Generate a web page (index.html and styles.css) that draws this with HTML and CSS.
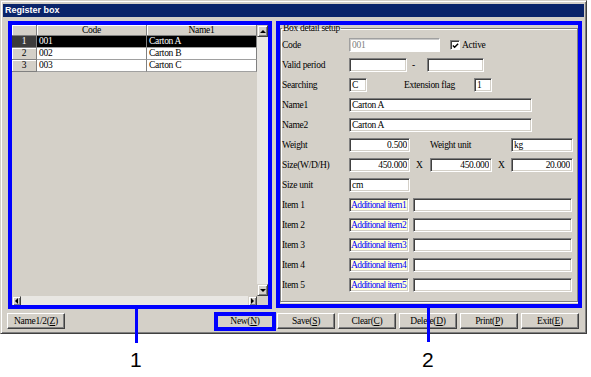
FILE: index.html
```html
<!DOCTYPE html>
<html lang="en">
<head>
    <meta charset="UTF-8">
    <title>Register box</title>
    <link rel="stylesheet" href="styles.css">
</head>
<body>

<div class="window">
    <div class="titlebar">Register box</div>

    <div class="main">
        <div class="grid-pane">
            <div class="grid-top">
                <div class="grid-view">
                    <table class="grid">
                        <colgroup>
                            <col class="c-head">
                            <col class="c-data">
                            <col class="c-data">
                        </colgroup>
                        <thead>
                            <tr><th></th><th>Code</th><th>Name1</th></tr>
                        </thead>
                        <tbody>
                            <tr class="sel"><th>1</th><td>001</td><td>Carton A</td></tr>
                            <tr><th>2</th><td>002</td><td>Carton B</td></tr>
                            <tr><th>3</th><td>003</td><td>Carton C</td></tr>
                        </tbody>
                    </table>
                </div>
                <div class="vscroll">
                    <div class="sbtn"><span class="arr up"></span></div>
                    <div class="track"></div>
                    <div class="sbtn"><span class="arr down"></span></div>
                </div>
            </div>
            <div class="hscroll-row">
                <div class="hscroll">
                    <div class="sbtn h"><span class="arr left"></span></div>
                    <div class="track"></div>
                    <div class="sbtn h"><span class="arr right"></span></div>
                </div>
                <div class="sb-corner"></div>
            </div>
        </div>

        <fieldset class="detail">
            <legend>Box detail setup</legend>

            <div class="row">
                <span class="lbl">Code</span>
                <input class="fld w91 disabled" value="001" readonly>
                <span class="check">
                    <svg width="8" height="8" viewBox="0 0 8 8"><path d="M1 3.5 L3 5.5 L7 1.5" fill="none" stroke="#000" stroke-width="1.6"/></svg>
                </span>
                <span class="check-lbl">Active</span>
            </div>
            <div class="row">
                <span class="lbl">Valid period</span>
                <input class="fld w58" value="">
                <span class="sep dash">-</span>
                <input class="fld w57" value="">
            </div>
            <div class="row">
                <span class="lbl">Searching</span>
                <input class="fld w18" value="C">
                <span class="lbl-mid ext">Extension flag</span>
                <input class="fld w18" value="1">
            </div>
            <div class="row">
                <span class="lbl">Name1</span>
                <input class="fld w183" value="Carton A">
            </div>
            <div class="row">
                <span class="lbl">Name2</span>
                <input class="fld w183" value="Carton A">
            </div>
            <div class="row">
                <span class="lbl">Weight</span>
                <input class="fld w61 num" value="0.500">
                <span class="lbl-mid wunit">Weight unit</span>
                <input class="fld w62" value="kg">
            </div>
            <div class="row">
                <span class="lbl">Size(W/D/H)</span>
                <input class="fld w61 num" value="450.000">
                <span class="sep x1">X</span>
                <input class="fld w62 num" value="450.000">
                <span class="sep x2">X</span>
                <input class="fld w62 num" value="20.000">
            </div>
            <div class="row">
                <span class="lbl">Size unit</span>
                <input class="fld w61" value="cm">
            </div>
            <div class="row">
                <span class="lbl">Item 1</span>
                <input class="fld item" value="Additional item1" readonly>
                <input class="fld w159" value="">
            </div>
            <div class="row">
                <span class="lbl">Item 2</span>
                <input class="fld item" value="Additional item2" readonly>
                <input class="fld w159" value="">
            </div>
            <div class="row">
                <span class="lbl">Item 3</span>
                <input class="fld item" value="Additional item3" readonly>
                <input class="fld w159" value="">
            </div>
            <div class="row">
                <span class="lbl">Item 4</span>
                <input class="fld item" value="Additional item4" readonly>
                <input class="fld w159" value="">
            </div>
            <div class="row">
                <span class="lbl">Item 5</span>
                <input class="fld item" value="Additional item5" readonly>
                <input class="fld w159" value="">
            </div>
        </fieldset>
    </div>

    <div class="buttons">
        <button class="btn">Name1/2(<u>Z</u>)</button>
        <button class="btn new">New(<u>N</u>)</button>
        <button class="btn">Save(<u>S</u>)</button>
        <button class="btn">Clear(<u>C</u>)</button>
        <button class="btn">Delete(<u>D</u>)</button>
        <button class="btn">Print(<u>P</u>)</button>
        <button class="btn">Exit(<u>E</u>)</button>
    </div>
</div>

<!-- callout annotations -->
<div class="mark mark-grid"></div>
<div class="mark mark-detail"></div>
<div class="mark mark-new"></div>
<div class="callout-line line-1"></div>
<div class="callout-line line-2"></div>
<div class="callout-num num-1">1</div>
<div class="callout-num num-2">2</div>

</body>
</html>
```

FILE: styles.css
```css
* {
    box-sizing: border-box;
}
body {
    margin: 0;
    background: #fff;
    font-family: "Liberation Serif", serif;
    font-size: 9.5px;
    letter-spacing: -0.3px;
    color: #000;
}
.window {
    width: 587px;
    height: 334px;
    background: #d4d0c8;
    border: 1px solid;
    border-color: #d4d0c8 #404040 #404040 #d4d0c8;
    box-shadow: inset 1px 1px #fff, inset -1px -1px #808080;
    padding: 3px 2px 2px 2px;
}
.titlebar {
    height: 13px;
    background: #0a246a;
    color: #fff;
    font-family: "Liberation Sans", sans-serif;
    font-weight: bold;
    font-size: 9px;
    letter-spacing: 0;
    line-height: 13px;
    padding-left: 2px;
}
.main {
    display: flex;
    align-items: flex-start;
    padding: 8px 0 0 9px;
}

/* grid */
.grid-pane {
    width: 256px;
    height: 281px;
    display: flex;
    flex-direction: column;
}
.grid-top {
    display: flex;
    height: 271px;
}
.grid-view {
    width: 245px;
    background: #d4d0c8;
}
.grid {
    table-layout: fixed;
    width: 245px;
    border-collapse: separate;
    border-spacing: 0;
}
.c-head {
    width: 25px;
}
.c-data {
    width: 110px;
}
.grid th, .grid td {
    height: 12px;
    padding: 0 2px;
    font-weight: normal;
    line-height: 11px;
    white-space: nowrap;
    overflow: hidden;
}
.grid th {
    background: #d4d0c8;
    border-right: 1px solid #808080;
    border-bottom: 1px solid #808080;
    box-shadow: inset 1px 1px #fff;
    text-align: center;
}
.grid thead th {
    height: 11px;
    line-height: 10px;
}
.grid td {
    background: #fff;
    border-right: 1px solid #808080;
    border-bottom: 1px solid #a0a0a0;
    text-align: left;
}
.grid tr.sel td {
    background: #000;
    color: #fff;
}
.grid tr.sel th {
    background: #3c3c3c;
    color: #fff;
    box-shadow: none;
}

/* scrollbars */
.vscroll {
    width: 11px;
    display: flex;
    flex-direction: column;
}
.track {
    flex: 1;
    background: #e9e7e3;
}
.sbtn {
    height: 12px;
    background: #d4d0c8;
    border: 1px solid;
    border-color: #d4d0c8 #404040 #404040 #d4d0c8;
    box-shadow: inset 1px 1px #fff, inset -1px -1px #808080;
    display: flex;
    align-items: center;
    justify-content: center;
}
.sbtn.h {
    width: 9px;
    height: 10px;
}
.arr {
    width: 0;
    height: 0;
    border: 3px solid transparent;
}
.arr.up {
    border-top: 0;
    border-bottom: 3px solid #000;
}
.arr.down {
    border-bottom: 0;
    border-top: 3px solid #000;
}
.arr.left {
    border-left: 0;
    border-right: 3px solid #000;
}
.arr.right {
    border-right: 0;
    border-left: 3px solid #000;
}
.hscroll-row {
    display: flex;
    height: 10px;
}
.hscroll {
    width: 245px;
    display: flex;
}
.sb-corner {
    width: 11px;
    background: #d4d0c8;
}

/* detail group box */
.detail {
    width: 298px;
    height: 278px;
    margin: -1px 0 0 12px;
    padding: 2px 0 0 1px;
    border: 1px solid #808080;
    box-shadow: 1px 1px 0 #fff, inset 1px 1px 0 #fff;
}
.detail legend {
    padding: 0 1px;
    line-height: 9px;
}
.row {
    display: flex;
    align-items: center;
    height: 20px;
}
.lbl {
    width: 67px;
    flex: none;
}
.fld {
    height: 14px;
    flex: none;
    margin: 0;
    padding: 0 2px;
    font: inherit;
    letter-spacing: inherit;
    color: #000;
    background: #fff;
    border: 1px solid;
    border-color: #808080 #fff #fff #808080;
    box-shadow: inset 1px 1px #404040, inset -1px -1px #d4d0c8;
    outline: none;
}
.fld.disabled {
    color: #808080;
    border-color: #a0a0a0 #fff #fff #a0a0a0;
    box-shadow: inset 1px 1px #c8c8c8;
}
.fld.num {
    text-align: right;
}
.fld.item {
    width: 60px;
    padding: 0 0 0 1px;
    letter-spacing: -0.6px;
    background: #ffffd8;
    color: #0000ff;
    margin-right: 4px;
}
.w18 { width: 18px; }
.w57 { width: 57px; }
.w58 { width: 58px; }
.w61 { width: 61px; }
.w62 { width: 62px; }
.w91 { width: 91px; }
.w159 { width: 159px; }
.w183 { width: 183px; }

.check {
    width: 10px;
    height: 10px;
    margin-left: 10px;
    background: #fff;
    border: 1px solid;
    border-color: #808080 #fff #fff #808080;
    box-shadow: inset 1px 1px #404040;
    display: flex;
    align-items: center;
    justify-content: center;
}
.check svg {
    margin: 1px 0 0 1px;
}
.check-lbl {
    margin-left: 2px;
}
.sep {
    flex: none;
}
.dash {
    width: 20px;
    padding-left: 5px;
}
.x1 {
    width: 20px;
    padding-left: 6px;
}
.x2 {
    width: 19px;
    padding-left: 6px;
}
.lbl-mid {
    flex: none;
}
.ext {
    width: 70px;
    margin-left: 37px;
}
.wunit {
    width: 81px;
    margin-left: 20px;
}

/* bottom buttons */
.buttons {
    display: flex;
    gap: 3px;
    padding: 7px 0 0 4px;
}
.btn {
    width: 58px;
    height: 16px;
    padding: 0;
    font: inherit;
    letter-spacing: inherit;
    color: #000;
    background: #d4d0c8;
    border: 1px solid;
    border-color: #fff #404040 #404040 #fff;
    box-shadow: inset -1px -1px #808080;
}
.btn.new {
    margin-left: 148px;
}

/* annotations */
.mark {
    position: absolute;
    border: 4px solid #0000ff;
}
.mark-grid {
    left: 8px;
    top: 21px;
    width: 264px;
    height: 288px;
}
.mark-detail {
    left: 276px;
    top: 21px;
    width: 306px;
    height: 287px;
}
.mark-new {
    left: 214px;
    top: 312px;
    width: 62px;
    height: 19px;
}
.callout-line {
    position: absolute;
    width: 3px;
    background: #0000ff;
}
.line-1 {
    left: 135px;
    top: 309px;
    height: 34px;
}
.line-2 {
    left: 427px;
    top: 308px;
    height: 34px;
}
.callout-num {
    position: absolute;
    top: 349px;
    font-family: "Liberation Sans", sans-serif;
    font-size: 21px;
    line-height: 21px;
    letter-spacing: 0;
}
.num-1 {
    left: 130px;
}
.num-2 {
    left: 422px;
}
```
